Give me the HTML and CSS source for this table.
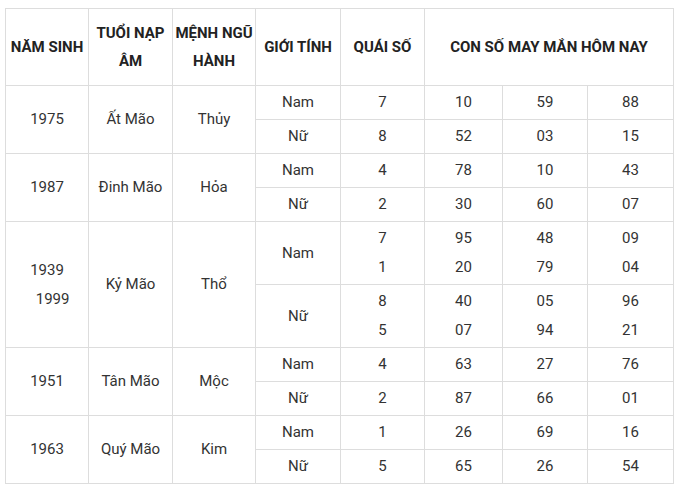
FILE: index.html
```html
<!DOCTYPE html>
<html lang="vi">
<head>
<meta charset="utf-8">
<title>Con số may mắn</title>
<link rel="stylesheet" href="styles.css">
</head>
<body>
<table class="lucky">
  <colgroup>
    <col class="c1"><col class="c2"><col class="c3"><col class="c4"><col class="c5"><col class="c6"><col class="c7"><col class="c8">
  </colgroup>
  <thead>
    <tr class="head">
      <th>NĂM SINH</th>
      <th>TUỔI NẠP ÂM</th>
      <th>MỆNH NGŨ HÀNH</th>
      <th>GIỚI TÍNH</th>
      <th>QUÁI SỐ</th>
      <th colspan="3">CON SỐ MAY MẮN HÔM NAY</th>
    </tr>
  </thead>
  <tbody>
    <tr class="r">
      <td rowspan="2">1975</td><td rowspan="2">Ất Mão</td><td rowspan="2">Thủy</td>
      <td>Nam</td><td>7</td><td>10</td><td>59</td><td>88</td>
    </tr>
    <tr class="r">
      <td>Nữ</td><td>8</td><td>52</td><td>03</td><td>15</td>
    </tr>
    <tr class="r">
      <td rowspan="2">1987</td><td rowspan="2">Đinh Mão</td><td rowspan="2">Hỏa</td>
      <td>Nam</td><td>4</td><td>78</td><td>10</td><td>43</td>
    </tr>
    <tr class="r">
      <td>Nữ</td><td>2</td><td>30</td><td>60</td><td>07</td>
    </tr>
    <tr class="r2">
      <td rowspan="2">1939<br>&nbsp;&nbsp;&nbsp;1999</td><td rowspan="2">Kỷ Mão</td><td rowspan="2">Thổ</td>
      <td>Nam</td><td>7<br>1</td><td>95<br>20</td><td>48<br>79</td><td>09<br>04</td>
    </tr>
    <tr class="r2">
      <td>Nữ</td><td>8<br>5</td><td>40<br>07</td><td>05<br>94</td><td>96<br>21</td>
    </tr>
    <tr class="r">
      <td rowspan="2">1951</td><td rowspan="2">Tân Mão</td><td rowspan="2">Mộc</td>
      <td>Nam</td><td>4</td><td>63</td><td>27</td><td>76</td>
    </tr>
    <tr class="r">
      <td>Nữ</td><td>2</td><td>87</td><td>66</td><td>01</td>
    </tr>
    <tr class="r">
      <td rowspan="2">1963</td><td rowspan="2">Quý Mão</td><td rowspan="2">Kim</td>
      <td>Nam</td><td>1</td><td>26</td><td>69</td><td>16</td>
    </tr>
    <tr class="r">
      <td>Nữ</td><td>5</td><td>65</td><td>26</td><td>54</td>
    </tr>
  </tbody>
</table>
</body>
</html>
```
FILE: styles.css
```css
html, body {
  margin: 0;
  padding: 0;
  background: #fff;
}
body {
  padding: 8px 0 0 5px;
  font-family: Roboto, "Liberation Sans", Arial, sans-serif;
  font-size: 15px;
  color: #333;
}
.lucky {
  border-collapse: collapse;
  table-layout: fixed;
  width: 668px;
}
.c1 { width: 83px; }
.c2 { width: 84px; }
.c3 { width: 83px; }
.c4 { width: 85px; }
.c5 { width: 84px; }
.c6 { width: 78px; }
.c7 { width: 85px; }
.c8 { width: 86px; }
.lucky th,
.lucky td {
  border: 1px solid #ddd;
  text-align: center;
  vertical-align: middle;
  padding: 0 2px;
}
.lucky th {
  font-weight: 700;
  color: #222;
  line-height: 28px;
}
.lucky td {
  line-height: 29px;
}
.head { height: 77px; }
.r { height: 34px; }
.r2 { height: 63px; }
```
